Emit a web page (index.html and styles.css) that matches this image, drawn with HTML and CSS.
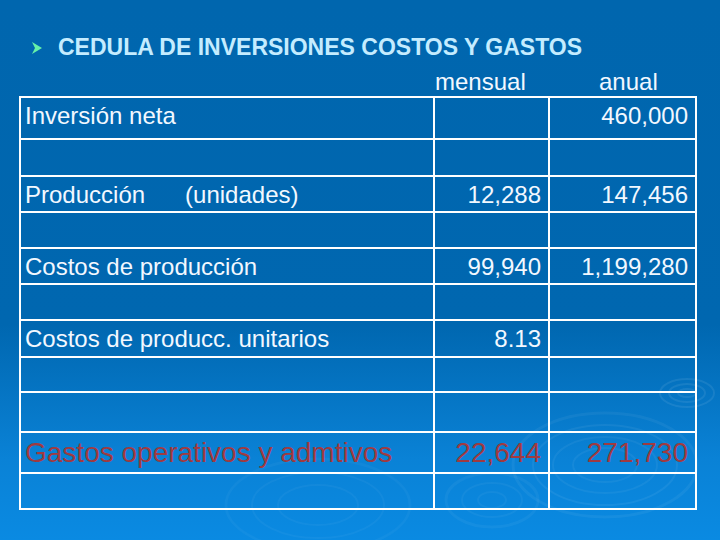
FILE: index.html
```html
<!DOCTYPE html>
<html lang="es">
<head>
<meta charset="utf-8">
<title>Cedula de inversiones</title>
<link rel="stylesheet" href="styles.css">
</head>
<body>
<div class="slide">
  <svg class="ripples" width="720" height="540" viewBox="0 0 720 540" aria-hidden="true">
    <g fill="none" stroke="#ffffff">
      <ellipse cx="605" cy="465" rx="92" ry="52" stroke-opacity="0.05" stroke-width="3"/>
      <ellipse cx="605" cy="465" rx="72" ry="40" stroke-opacity="0.06" stroke-width="2"/>
      <ellipse cx="605" cy="465" rx="52" ry="28" stroke-opacity="0.05" stroke-width="2"/>
      <ellipse cx="605" cy="465" rx="32" ry="17" stroke-opacity="0.05" stroke-width="2"/>
      <ellipse cx="687" cy="393" rx="27" ry="14" stroke-opacity="0.08" stroke-width="2"/>
      <ellipse cx="687" cy="393" rx="18" ry="9" stroke-opacity="0.08" stroke-width="2"/>
      <ellipse cx="687" cy="393" rx="9" ry="4" stroke-opacity="0.08" stroke-width="2"/>
      <ellipse cx="492" cy="500" rx="46" ry="27" stroke-opacity="0.045" stroke-width="3"/>
      <ellipse cx="492" cy="500" rx="30" ry="17" stroke-opacity="0.045" stroke-width="2"/>
      <ellipse cx="492" cy="500" rx="14" ry="8" stroke-opacity="0.045" stroke-width="2"/>
      <ellipse cx="318" cy="505" rx="92" ry="46" stroke-opacity="0.035" stroke-width="3"/>
      <ellipse cx="318" cy="505" rx="66" ry="33" stroke-opacity="0.04" stroke-width="2"/>
      <ellipse cx="318" cy="505" rx="40" ry="20" stroke-opacity="0.04" stroke-width="2"/>
    </g>
  </svg>

  <div class="content">
    <h1 class="title">
      <svg class="bullet" width="10" height="12" viewBox="0 0 10 12" aria-hidden="true">
        <polygon points="0,0 10,6 0,12 3,6" fill="#66f0a8"/>
      </svg>
      <span>CEDULA DE INVERSIONES COSTOS Y GASTOS</span>
    </h1>

    <div class="heads">
      <span class="head-m">mensual</span>
      <span class="head-a">anual</span>
    </div>

    <div class="grid">
      <div class="row h40 first">
        <div class="c1">Inversión neta</div><div class="c2"></div><div class="c3">460,000</div>
      </div>
      <div class="row h37"><div class="c1"></div><div class="c2"></div><div class="c3"></div></div>
      <div class="row h36">
        <div class="c1">Producción<span class="units">(unidades)</span></div><div class="c2">12,288</div><div class="c3">147,456</div>
      </div>
      <div class="row h36"><div class="c1"></div><div class="c2"></div><div class="c3"></div></div>
      <div class="row h36">
        <div class="c1">Costos de producción</div><div class="c2">99,940</div><div class="c3">1,199,280</div>
      </div>
      <div class="row h36"><div class="c1"></div><div class="c2"></div><div class="c3"></div></div>
      <div class="row h37">
        <div class="c1">Costos de producc. unitarios</div><div class="c2">8.13</div><div class="c3"></div>
      </div>
      <div class="row h35"><div class="c1"></div><div class="c2"></div><div class="c3"></div></div>
      <div class="row h40"><div class="c1"></div><div class="c2"></div><div class="c3"></div></div>
      <div class="row h41 red">
        <div class="c1">Gastos operativos y admtivos</div><div class="c2">22,644</div><div class="c3">271,730</div>
      </div>
      <div class="row h36"><div class="c1"></div><div class="c2"></div><div class="c3"></div></div>
    </div>
  </div>
</div>
</body>
</html>
```

FILE: styles.css
```css
* { box-sizing: border-box; }

html, body {
  margin: 0;
  padding: 0;
}

body {
  width: 720px;
  height: 540px;
  overflow: hidden;
  font-family: "Liberation Sans", Arial, sans-serif;
}

.slide {
  position: relative;
  width: 720px;
  height: 540px;
  background: linear-gradient(to bottom, #0066ae 0%, #0067b0 60%, #0a82d6 85%, #0a8ae2 100%);
  color: #f2f8ff;
}

.ripples {
  position: absolute;
  left: 0;
  top: 0;
}

.content {
  position: relative;
  padding-top: 34px;
}

.title {
  margin: 0;
  display: flex;
  align-items: center;
  padding-left: 32px;
  gap: 16px;
  font-size: 23px;
  font-weight: bold;
  line-height: 26px;
  color: #c4ecff;
}

.bullet {
  flex: none;
  margin-top: 2px;
}

.heads {
  display: flex;
  margin-top: 10px;
  padding-left: 435px;
  font-size: 24px;
  line-height: 24px;
  height: 24px;
}

.head-m {
  width: 115px;
}

.head-a {
  padding-left: 49px;
}

.grid {
  margin: 2px 0 0 19px;
  width: 678px;
  border: 2px solid #ffffff;
  font-size: 24px;
  line-height: 28px;
}

.row {
  display: flex;
  border-top: 2px solid #ffffff;
}

.row.first { border-top: none; }

.h35 { height: 35px; }
.h36 { height: 36px; }
.h37 { height: 37px; }
.h40 { height: 40px; }
.h41 { height: 41px; }

.c1, .c2, .c3 {
  padding-top: 4px;
  white-space: nowrap;
}

.c1 {
  width: 412px;
  padding-left: 4px;
}

.c2 {
  width: 115px;
  border-left: 2px solid #ffffff;
  text-align: right;
  padding-right: 7px;
}

.c3 {
  width: 147px;
  border-left: 2px solid #ffffff;
  text-align: right;
  padding-right: 7px;
}

.units {
  margin-left: 40px;
}

.red {
  color: #a03a40;
  font-size: 28px;
  line-height: 32px;
}
```
